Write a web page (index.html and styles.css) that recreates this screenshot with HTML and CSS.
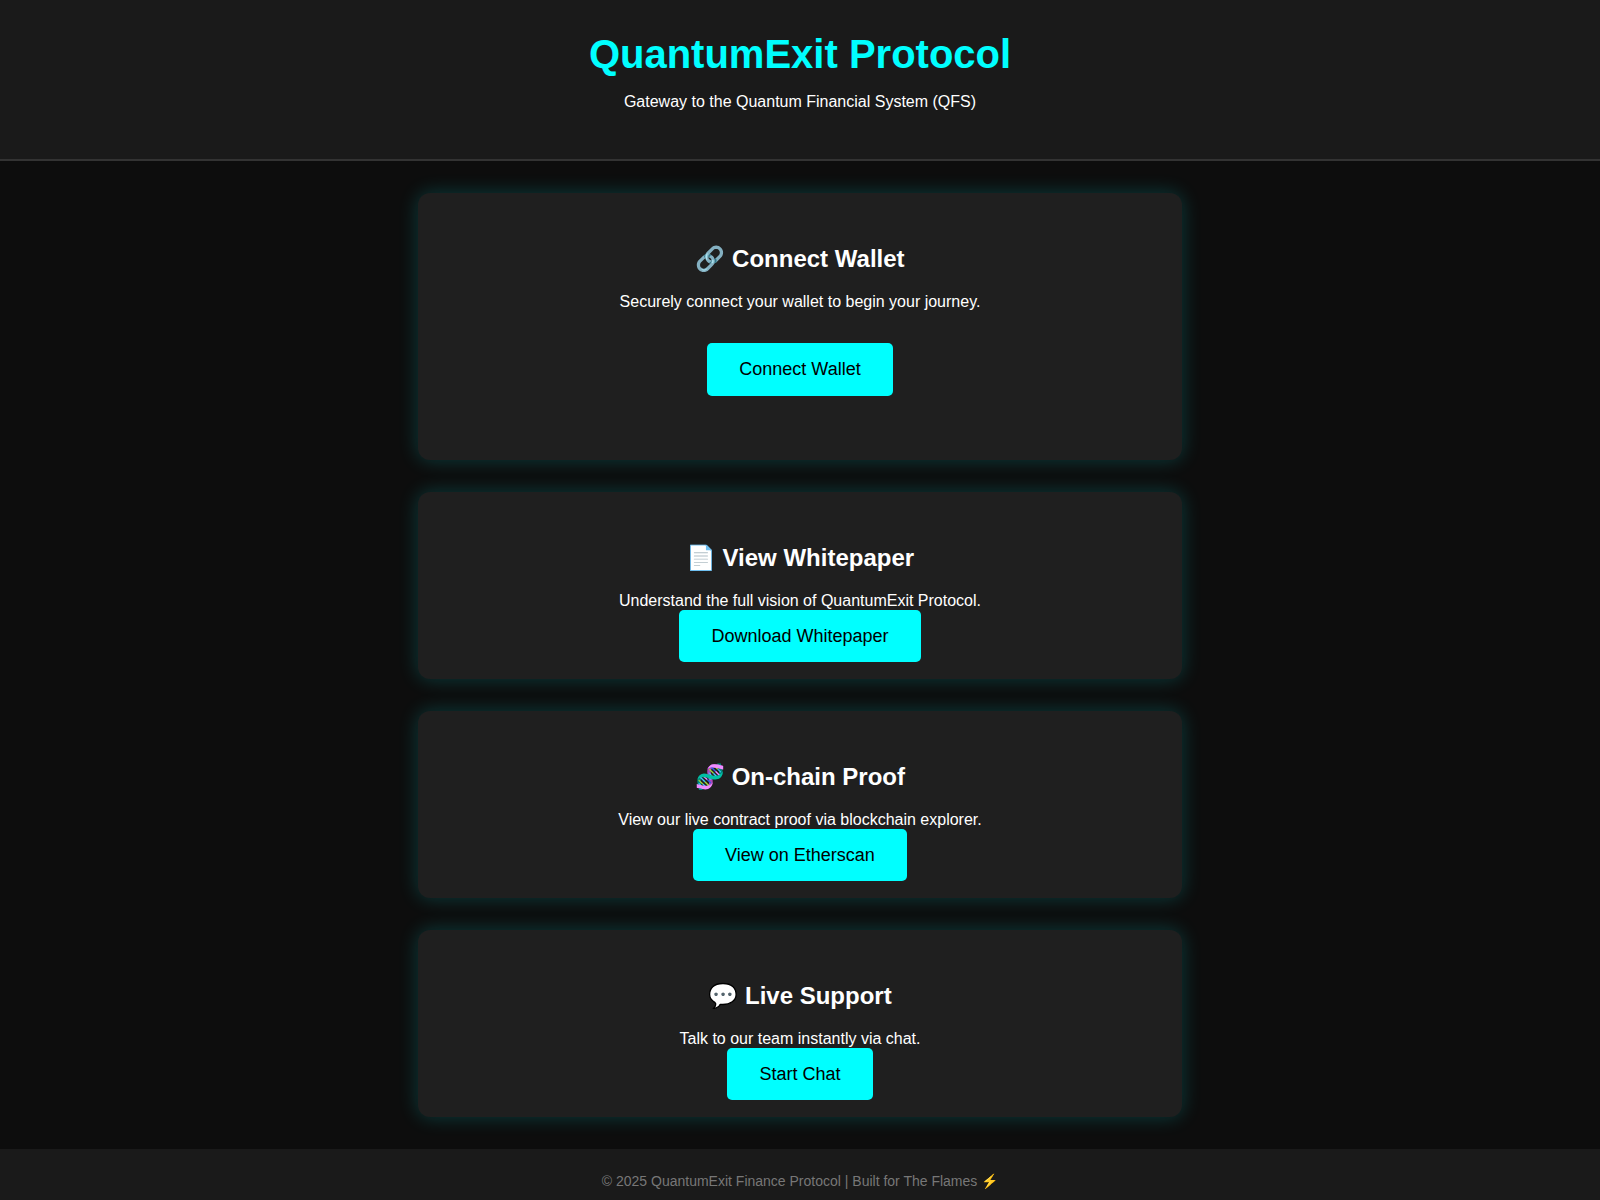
FILE: index.html
```html
<!DOCTYPE html>
<html lang="en">
<head>
    <meta charset="UTF-8">
    <meta name="viewport" content="width=device-width, initial-scale=1.0">
    <title>QuantumExit Protocol</title>
    <link rel="stylesheet" href="styles.css">
</head>
<body>
<header>
    <h1>QuantumExit Protocol</h1>
    <p>Gateway to the Quantum Financial System (QFS)</p>
</header>

<main class="container">
    <section class="card">
        <h2>🔗 Connect Wallet</h2>
        <p>Securely connect your wallet to begin your journey.</p>
        <button type="button" class="button connect">Connect Wallet</button>
    </section>

    <section class="card">
        <h2>📄 View Whitepaper</h2>
        <p>Understand the full vision of QuantumExit Protocol.</p>
        <a class="button" href="#whitepaper">Download Whitepaper</a>
    </section>

    <section class="card">
        <h2>🧬 On-chain Proof</h2>
        <p>View our live contract proof via blockchain explorer.</p>
        <a class="button" href="#etherscan">View on Etherscan</a>
    </section>

    <section class="card">
        <h2>💬 Live Support</h2>
        <p>Talk to our team instantly via chat.</p>
        <a class="button" href="#chat">Start Chat</a>
    </section>
</main>

<footer>
    © 2025 QuantumExit Finance Protocol | Built for The Flames ⚡
</footer>
</body>
</html>
```
FILE: styles.css
```css
body {
    margin: 0;
    font-family: "Liberation Sans", Arial, sans-serif;
    background: #0d0d0d;
    color: #fff;
    text-align: center;
}

header {
    background: #1a1a1a;
    padding: 32px;
    border-bottom: 2px solid #333;
}

h1 {
    margin: 0;
    font-size: 40px;
    color: #0ff;
}

header p {
    margin: 16px 0;
}

.container {
    padding: 32px;
}

.card {
    max-width: 700px;
    margin: 0 auto 32px;
    padding: 32px;
    background: #1f1f1f;
    border-radius: 12px;
    box-shadow: 0 0 20px rgba(0, 255, 255, 0.2);
}

.card:last-child {
    margin-bottom: 0;
}

.card h2 {
    margin: 20px 0;
    font-size: 24px;
}

.card p {
    margin: 16px 0;
}

.button {
    padding: 16px 32px;
    font-family: inherit;
    font-size: 18px;
    color: #000;
    background: #0ff;
    border: none;
    border-radius: 5px;
    text-decoration: none;
    cursor: pointer;
}

.connect {
    margin: 16px 0 32px;
}

footer {
    background: #1a1a1a;
    padding: 24px;
    font-size: 14px;
    color: #777;
}
```
